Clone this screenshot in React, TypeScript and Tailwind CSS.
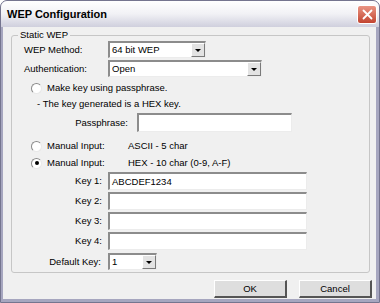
import React from "react";

const font = { fontFamily: '"Liberation Sans", Arial, sans-serif' };

function Sunken({ className = "", children }: { className?: string; children?: React.ReactNode }) {
  return (
    <div
      className={`flex items-center bg-white border-t-2 border-l-2 border-b border-r border-t-[#8c8c8c] border-l-[#8c8c8c] border-b-[#ececec] border-r-[#ececec] ${className}`}
    >
      {children}
    </div>
  );
}

function Select({ value, className = "" }: { value: string; className?: string }) {
  return (
    <Sunken className={`h-[17px] ${className}`}>
      <span className="flex-1 pl-[2px] text-[9.5px] leading-none">{value}</span>
      <div className="h-full w-[14px] flex items-center justify-center bg-[#e3e3e3] border-t border-l border-b border-r border-t-white border-l-white border-b-[#7a7a7a] border-r-[#7a7a7a]">
        <div className="w-0 h-0 border-l-[3px] border-r-[3px] border-t-[3px] border-l-transparent border-r-transparent border-t-black" />
      </div>
    </Sunken>
  );
}

function Radio({ checked }: { checked?: boolean }) {
  return (
    <div className="w-[11px] h-[11px] rounded-full bg-white border border-t-[#8a8a8a] border-l-[#8a8a8a] border-b-[#e8e8e8] border-r-[#e8e8e8] flex items-center justify-center">
      {checked && <div className="w-[4px] h-[4px] rounded-full bg-black" />}
    </div>
  );
}

function KeyRow({ label, value }: { label: string; value?: string }) {
  return (
    <div className="mt-[2px] flex h-[18px] items-center">
      <span className="w-[84px] text-right pr-[6px]">{label}</span>
      <Sunken className="h-[18px] w-[199px]">
        <span className="pl-[2px]">{value}</span>
      </Sunken>
    </div>
  );
}

function Button({ children }: { children: React.ReactNode }) {
  return (
    <div className="w-[73px] h-[18px] flex items-center justify-center bg-[#dedede] border-t border-l border-t-white border-l-white border-b-2 border-r-2 border-b-[#555] border-r-[#555] text-[9.5px]">
      {children}
    </div>
  );
}

export default function App() {
  return (
    <div
      className="w-[380px] h-[303px] flex flex-col bg-[#a6a6bf] rounded-t-[7px] overflow-hidden text-black text-[9.5px] leading-none border border-[#75758f]"
      style={font}
    >
      <div className="h-[26px] shrink-0 flex items-center justify-between pl-[6px] pr-[2px] bg-gradient-to-b from-[#ffffff] via-[#f1f1f5] to-[#cfcfdd]">
        <span className="text-[11px] font-bold text-black">WEP Configuration</span>
        <div className="w-[20px] h-[19px] rounded-[3px] border border-white bg-gradient-to-b from-[#e99483] to-[#c2432f] flex items-center justify-center">
          <svg width="11" height="11" viewBox="0 0 11 11">
            <path d="M1.5 1.5 L9.5 9.5 M9.5 1.5 L1.5 9.5" stroke="white" strokeWidth="1.8" strokeLinecap="round" />
          </svg>
        </div>
      </div>
      <div className="flex-1 ml-[2px] mr-[3px] mb-[3px] bg-[#f0f0f0] flex flex-col">
        <div className="relative mt-[8px] ml-[8px] mr-[6px] h-[238px] border border-[#c6c6c6] rounded-[3px]">
          <span className="absolute -top-[6px] left-[6px] px-[2px] bg-[#f0f0f0]">Static WEP</span>
          <div className="flex flex-col pl-[12px]">
            <div className="mt-[5px] flex h-[17px] items-center">
              <span className="w-[84px]">WEP Method:</span>
              <Select value="64 bit WEP" className="w-[98px]" />
            </div>
            <div className="mt-[2px] flex h-[17px] items-center">
              <span className="w-[84px]">Authentication:</span>
              <Select value="Open" className="w-[154px]" />
            </div>
            <div className="mt-[4px] flex h-[14px] items-center pl-[7px] gap-[5px]">
              <Radio />
              <span>Make key using passphrase.</span>
            </div>
            <div className="mt-[2px] flex h-[14px] items-center pl-[13px]">
              <span>- The key generated is a HEX key.</span>
            </div>
            <div className="mt-[2px] flex h-[19px] items-center">
              <span className="w-[113px] text-right pr-[9px]">Passphrase:</span>
              <Sunken className="h-[19px] w-[155px]" />
            </div>
            <div className="mt-[7px] flex h-[14px] items-center pl-[7px] gap-[5px]">
              <Radio />
              <span className="w-[76px]">Manual Input:</span>
              <span>ASCII - 5 char</span>
            </div>
            <div className="mt-[3px] flex h-[14px] items-center pl-[7px] gap-[5px]">
              <Radio checked />
              <span className="w-[76px]">Manual Input:</span>
              <span>HEX - 10 char (0-9, A-F)</span>
            </div>
            <KeyRow label="Key 1:" value="ABCDEF1234" />
            <KeyRow label="Key 2:" />
            <KeyRow label="Key 3:" />
            <KeyRow label="Key 4:" />
            <div className="mt-[3px] flex h-[17px] items-center">
              <span className="w-[84px] text-right pr-[7px]">Default Key:</span>
              <Select value="1" className="w-[49px]" />
            </div>
          </div>
        </div>
        <div className="mt-[7px] flex justify-end gap-[12px] pr-[4px]">
          <Button>OK</Button>
          <Button>Cancel</Button>
        </div>
      </div>
    </div>
  );
}
